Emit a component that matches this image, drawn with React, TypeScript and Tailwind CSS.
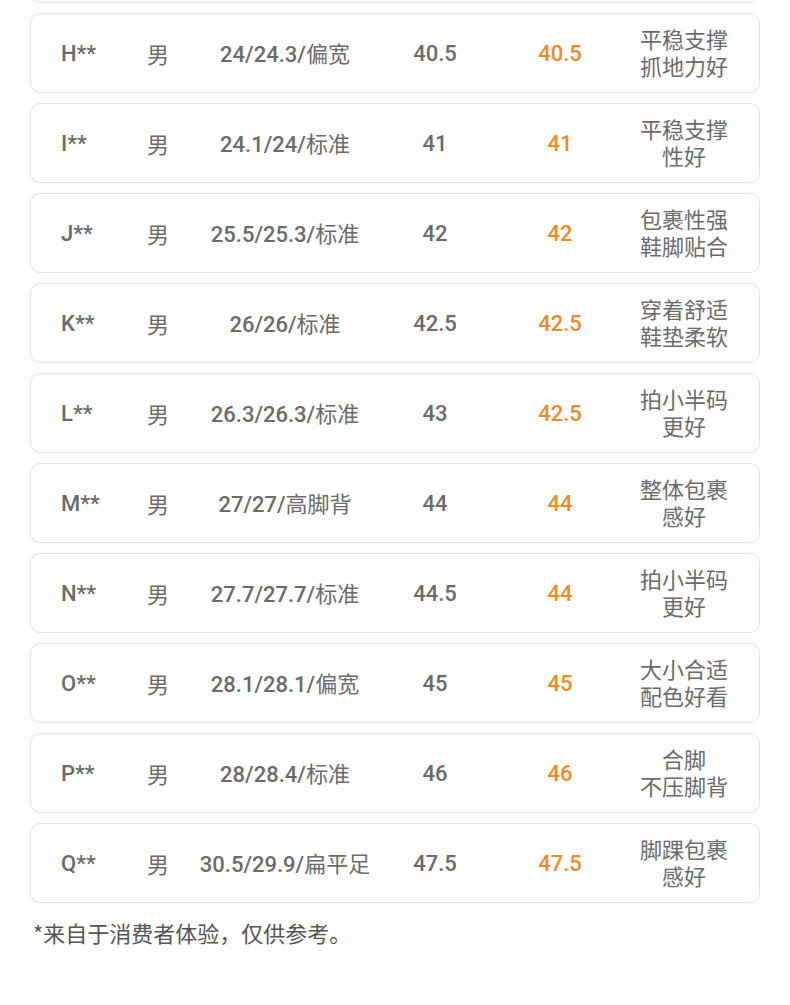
const ROWS = [
  { name: 'H**', sex: '男', size: '24/24.3/', shape: '偏宽', usual: '40.5', buy: '40.5', note: ['平稳支撑', '抓地力好'] },
  { name: 'I**', sex: '男', size: '24.1/24/', shape: '标准', usual: '41', buy: '41', note: ['平稳支撑', '性好'] },
  { name: 'J**', sex: '男', size: '25.5/25.3/', shape: '标准', usual: '42', buy: '42', note: ['包裹性强', '鞋脚贴合'] },
  { name: 'K**', sex: '男', size: '26/26/', shape: '标准', usual: '42.5', buy: '42.5', note: ['穿着舒适', '鞋垫柔软'] },
  { name: 'L**', sex: '男', size: '26.3/26.3/', shape: '标准', usual: '43', buy: '42.5', note: ['拍小半码', '更好'] },
  { name: 'M**', sex: '男', size: '27/27/', shape: '高脚背', usual: '44', buy: '44', note: ['整体包裹', '感好'] },
  { name: 'N**', sex: '男', size: '27.7/27.7/', shape: '标准', usual: '44.5', buy: '44', note: ['拍小半码', '更好'] },
  { name: 'O**', sex: '男', size: '28.1/28.1/', shape: '偏宽', usual: '45', buy: '45', note: ['大小合适', '配色好看'] },
  { name: 'P**', sex: '男', size: '28/28.4/', shape: '标准', usual: '46', buy: '46', note: ['合脚', '不压脚背'] },
  { name: 'Q**', sex: '男', size: '30.5/29.9/', shape: '扁平足', usual: '47.5', buy: '47.5', note: ['脚踝包裹', '感好'] },
];

const LATIN = "font-['Roboto','Liberation_Sans',sans-serif] font-medium";
const CJK = "font-['Noto_Sans_CJK_SC',sans-serif] font-normal";
const CARD = 'h-[80px] rounded-[10px] border border-[#e3e3e3]';

export default function App() {
  return (
    <div className="w-[790px] h-[1005px] overflow-hidden bg-white">
      <div className="flex flex-col gap-[10px] px-[30px] mt-[-77px]">
        {/* previous row, only its bottom edge shows */}
        <div className={CARD} />
        {ROWS.map((r) => (
          <div
            key={r.name}
            className={`${CARD} grid grid-cols-[70px_54px_200px_100px_150px_98px] items-center pl-[30px] pr-[28px] text-[22px] text-[#6b6b6b]`}
          >
            <div className={LATIN}>{r.name}</div>
            <div className={`${CJK} text-center`}>{r.sex}</div>
            <div className="text-center whitespace-nowrap">
              <span className={LATIN}>{r.size}</span>
              <span className={CJK}>{r.shape}</span>
            </div>
            <div className={`${LATIN} text-center`}>{r.usual}</div>
            <div className={`${LATIN} text-center text-[#f5891f]`}>{r.buy}</div>
            <div className={`${CJK} text-center leading-[27px] whitespace-nowrap -mt-[2px]`}>
              {r.note.map((n) => (
                <div key={n}>{n}</div>
              ))}
            </div>
          </div>
        ))}
      </div>
      <p className={`${CJK} mt-[13px] pl-[33px] text-[22px] text-[#555]`}>*来自于消费者体验，仅供参考。</p>
    </div>
  );
}
